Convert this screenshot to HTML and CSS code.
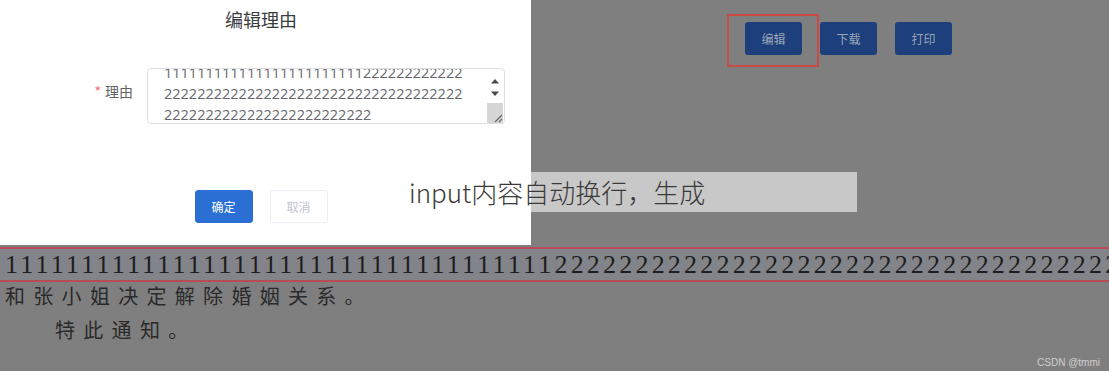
FILE: index.html
```html
<!DOCTYPE html>
<html lang="zh">
<head>
<meta charset="utf-8">
<title>编辑理由</title>
<link rel="stylesheet" href="styles.css">
</head>
<body>
<div class="page">
  <div class="top">
    <div class="dialog">
      <div class="dialog-title">编辑理由</div>
      <div class="form-item">
        <label class="form-label"><span class="req">*</span>理由</label>
        <div class="textarea">
          <div class="ta-text">
            <div class="ta-line">111111111111111111111111222222222222</div>
            <div class="ta-line">222222222222222222222222222222222222</div>
            <div class="ta-line">2222222222222222222222222</div>
          </div>
          <div class="ta-scroll">
            <div class="ta-arrows">
              <svg class="arrow" width="10" height="6" viewBox="0 0 10 6"><path d="M1 5.5 L5 1 L9 5.5 Z" fill="#4a4a4a"/></svg>
              <svg class="arrow" width="10" height="6" viewBox="0 0 10 6"><path d="M1 0.5 L5 5 L9 0.5 Z" fill="#4a4a4a"/></svg>
            </div>
            <div class="ta-thumb">
              <svg class="grip" width="12" height="12" viewBox="0 0 12 12"><path d="M4 11 L11 4 M8 11 L11 8" stroke="#6a6a6a" stroke-width="1.3" fill="none"/></svg>
            </div>
          </div>
        </div>
      </div>
      <div class="dialog-footer">
        <button class="btn btn-primary">确定</button>
        <button class="btn btn-default">取消</button>
      </div>
    </div>
    <div class="toolbar-area">
      <div class="toolbar">
        <button class="nav-btn">编辑</button>
        <button class="nav-btn">下载</button>
        <button class="nav-btn">打印</button>
      </div>
    </div>
  </div>
  <div class="doc">
    <div class="doc-line doc-marked">111111111111111111111111111111111111222222222222222222222222222222222222222222</div>
    <div class="doc-line doc-cn">和张小姐决定解除婚姻关系。</div>
    <div class="doc-line doc-cn doc-indent">特此通知。</div>
  </div>
  <div class="mark-box"></div>
  <div class="caption">input内容自动换行，生成</div>
  <div class="watermark">CSDN @tmmi</div>
</div>
</body>
</html>
```
FILE: styles.css
```css
html, body {
  margin: 0;
  padding: 0;
}
body {
  background: #7f7f7f;
  width: 1109px;
  height: 371px;
  overflow: hidden;
  font-family: "Noto Sans CJK SC", "Noto Sans", sans-serif;
}
.page {
  position: relative;
  width: 1109px;
  height: 371px;
  overflow: hidden;
}
.top {
  display: flex;
  height: 245px;
}
.dialog {
  width: 531px;
  height: 245px;
  background: #ffffff;
  box-sizing: border-box;
  padding-right: 9px;
  display: flex;
  flex-direction: column;
}
.dialog-title {
  text-align: center;
  font-size: 18px;
  line-height: 24px;
  color: #3a3b3e;
  margin-top: 7px;
}
.form-item {
  display: flex;
  margin-top: 37px;
}
.form-label {
  width: 133px;
  box-sizing: border-box;
  text-align: right;
  font-size: 14px;
  line-height: 40px;
  color: #606266;
  padding-top: 3px;
  margin-right: 14px;
}
.req {
  color: #f56c6c;
  margin-right: 4px;
}
.textarea {
  width: 358px;
  height: 56px;
  box-sizing: border-box;
  border: 1px solid #dcdfe6;
  border-radius: 4px;
  display: flex;
  overflow: hidden;
}
.ta-text {
  flex: 1;
  padding-left: 16px;
  margin-top: -7px;
  font-family: "Open Sans", "Noto Sans", sans-serif;
  font-size: 14.5px;
  line-height: 21px;
  color: #66686d;
  white-space: nowrap;
}
.ta-scroll {
  width: 16px;
  display: flex;
  flex-direction: column;
  margin-right: 1px;
}
.ta-arrows {
  height: 34px;
  display: flex;
  flex-direction: column;
  align-items: center;
  padding-top: 9px;
  box-sizing: border-box;
  gap: 7px;
}
.ta-thumb {
  flex: 1;
  background: #d6d6d6;
  display: flex;
  justify-content: flex-end;
  align-items: flex-end;
}
.grip {
  display: block;
}
.dialog-footer {
  display: flex;
  justify-content: center;
  gap: 17px;
  margin-top: 66px;
}
.btn {
  width: 58px;
  height: 33px;
  border-radius: 3px;
  font-family: "Noto Sans CJK SC", sans-serif;
  font-size: 12px;
  padding: 0;
  box-sizing: border-box;
}
.btn-primary {
  background: #2b6fd4;
  border: 1px solid #2b6fd4;
  color: #ffffff;
}
.btn-default {
  background: #ffffff;
  border: 1px solid #ebeef5;
  color: #c0c4cc;
}
.toolbar-area {
  flex: 1;
}
.toolbar {
  display: flex;
  gap: 18px;
  padding-left: 214px;
  padding-top: 22px;
}
.nav-btn {
  width: 57px;
  height: 33px;
  background: #1d3f7b;
  border: none;
  border-radius: 3px;
  color: #9aa4b8;
  font-family: "Noto Sans CJK SC", sans-serif;
  font-size: 12px;
  padding: 0;
}
.doc {
  margin-top: 2px;
}
.doc-line {
  white-space: nowrap;
  overflow: hidden;
}
.doc-marked {
  height: 35px;
  box-sizing: border-box;
  border-top: 2px solid #b84c56;
  border-bottom: 2px solid #b84c56;
  background: #83848a;
  font-family: "Liberation Serif", serif;
  font-size: 26px;
  line-height: 31px;
  letter-spacing: 3.2px;
  color: #1e1e1e;
  padding-left: 5px;
}
.doc-cn {
  font-family: "Noto Sans CJK SC", sans-serif;
  font-size: 20px;
  line-height: 34px;
  letter-spacing: 8.3px;
  color: #2a2a2a;
  padding-left: 5px;
}
.doc-marked + .doc-cn {
  margin-top: -3px;
}
.doc-indent {
  padding-left: 55px;
}
.mark-box {
  position: absolute;
  left: 727px;
  top: 14px;
  width: 92px;
  height: 53px;
  box-sizing: border-box;
  border: 2px solid #cc4a45;
}
.caption {
  position: absolute;
  left: 409px;
  top: 172px;
  width: 448px;
  height: 40px;
  background: linear-gradient(to right, transparent 122px, #c8c8c8 122px);
  font-family: "Noto Sans CJK SC", sans-serif;
  font-weight: 300;
  font-size: 26px;
  line-height: 40px;
  color: #3a3a3a;
  white-space: nowrap;
}
.watermark {
  position: absolute;
  right: 9px;
  bottom: 3px;
  font-family: "Liberation Sans", sans-serif;
  font-size: 10px;
  color: #cfcfcf;
}
```
